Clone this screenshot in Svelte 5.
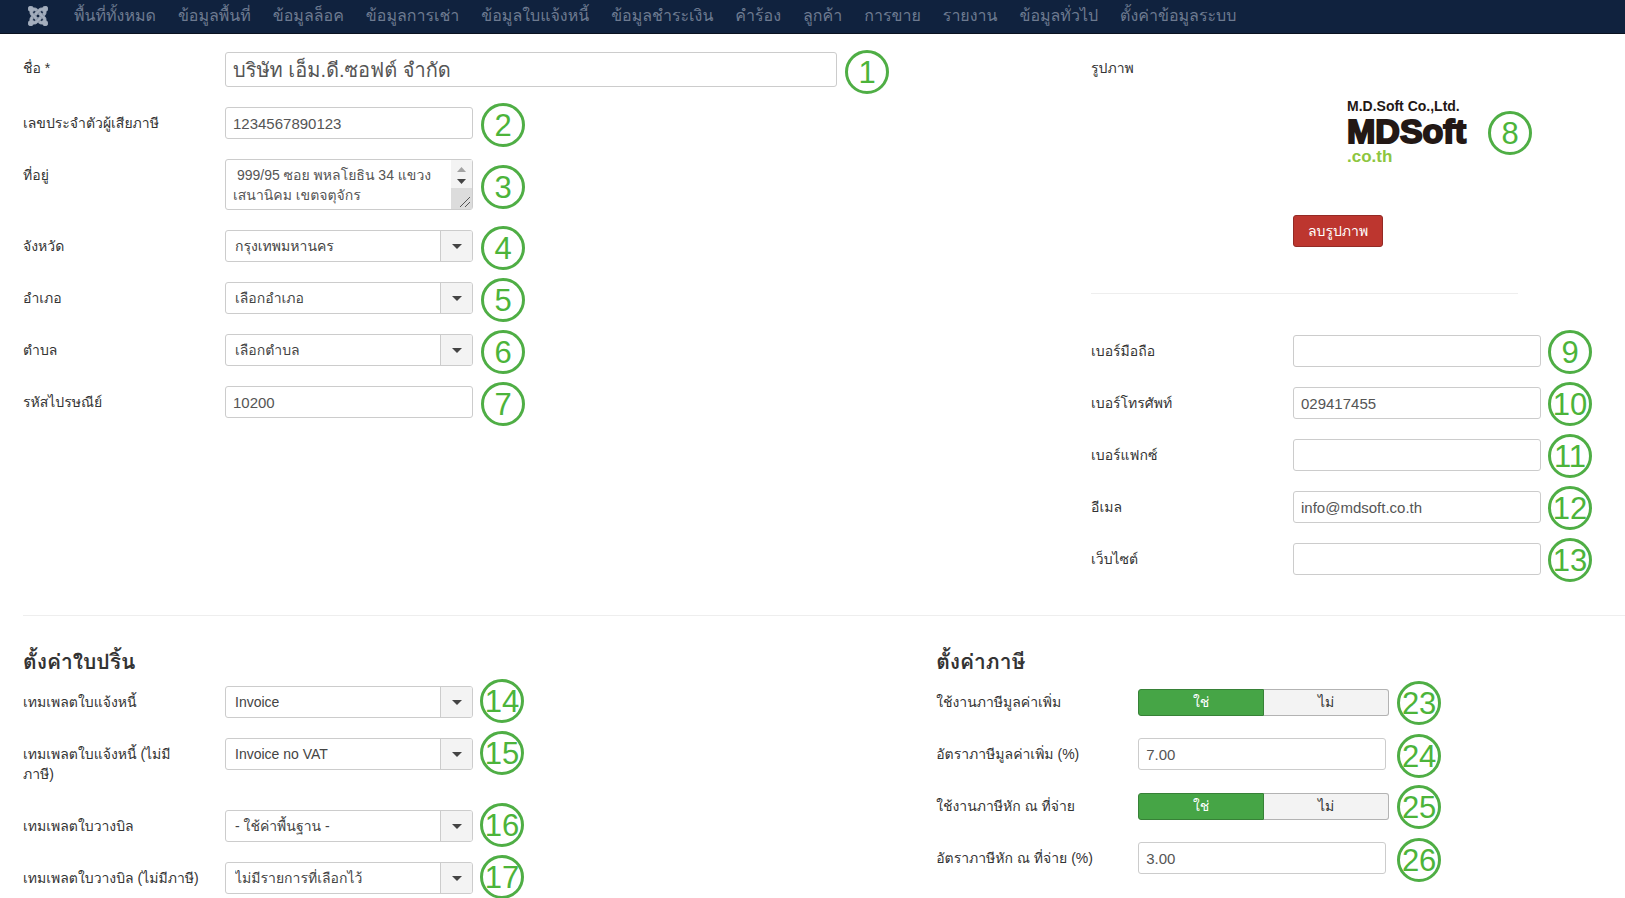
<script>
  const menu = [
    'พื้นที่ทั้งหมด', 'ข้อมูลพื้นที่', 'ข้อมูลล็อค', 'ข้อมูลการเช่า', 'ข้อมูลใบแจ้งหนี้', 'ข้อมูลชำระเงิน',
    'คำร้อง', 'ลูกค้า', 'การขาย', 'รายงาน', 'ข้อมูลทั่วไป', 'ตั้งค่าข้อมูลระบบ'
  ];

  const details = [
    { id: 'name', label: 'ชื่อ *', type: 'text', value: 'บริษัท เอ็ม.ดี.ซอฟต์ จำกัด', big: true, no: 1 },
    { id: 'tax-id', label: 'เลขประจำตัวผู้เสียภาษี', type: 'text', value: '1234567890123', no: 2 },
    { id: 'address', label: 'ที่อยู่', type: 'area', value: ' 999/95 ซอย พหลโยธิน 34 แขวง\nเสนานิคม เขตจตุจักร', no: 3 },
    { id: 'province', label: 'จังหวัด', type: 'select', value: 'กรุงเทพมหานคร', no: 4 },
    { id: 'district', label: 'อำเภอ', type: 'select', value: 'เลือกอำเภอ', no: 5 },
    { id: 'subdistrict', label: 'ตำบล', type: 'select', value: 'เลือกตำบล', no: 6 },
    { id: 'zip', label: 'รหัสไปรษณีย์', type: 'text', value: '10200', no: 7 }
  ];

  const contact = [
    { id: 'mobile', label: 'เบอร์มือถือ', type: 'text', value: '', no: 9 },
    { id: 'phone', label: 'เบอร์โทรศัพท์', type: 'text', value: '029417455', no: 10 },
    { id: 'fax', label: 'เบอร์แฟกซ์', type: 'text', value: '', no: 11 },
    { id: 'email', label: 'อีเมล', type: 'text', value: 'info@mdsoft.co.th', no: 12 },
    { id: 'website', label: 'เว็บไซต์', type: 'text', value: '', no: 13 }
  ];

  const print = [
    { id: 'tpl-invoice', label: 'เทมเพลตใบแจ้งหนี้', type: 'select', value: 'Invoice', no: 14 },
    { id: 'tpl-invoice-novat', label: 'เทมเพลตใบแจ้งหนี้ (ไม่มี\nภาษี)', type: 'select', value: 'Invoice no VAT', no: 15 },
    { id: 'tpl-bill', label: 'เทมเพลตใบวางบิล', type: 'select', value: '- ใช้ค่าพื้นฐาน -', no: 16 },
    { id: 'tpl-bill-novat', label: 'เทมเพลตใบวางบิล (ไม่มีภาษี)', type: 'select', value: 'ไม่มีรายการที่เลือกไว้', no: 17 }
  ];

  const tax = [
    { id: 'vat-on', label: 'ใช้งานภาษีมูลค่าเพิ่ม', type: 'toggle', no: 23 },
    { id: 'vat-rate', label: 'อัตราภาษีมูลค่าเพิ่ม (%)', type: 'text', value: '7.00', no: 24 },
    { id: 'wht-on', label: 'ใช้งานภาษีหัก ณ ที่จ่าย', type: 'toggle', no: 25 },
    { id: 'wht-rate', label: 'อัตราภาษีหัก ณ ที่จ่าย (%)', type: 'text', value: '3.00', no: 26 }
  ];
</script>

{#snippet field(f)}
  <div class="row">
    {#if f.type === 'toggle'}
      <span class="label" id="{f.id}-label">{f.label}</span>
    {:else}
      <label class="label" for={f.id}>{f.label}</label>
    {/if}
    <div class="control" class:wide={f.big}>
      {#if f.type === 'select'}
        <div class="select">
          <select id={f.id}><option>{f.value}</option></select>
          <span class="drop"></span>
        </div>
      {:else if f.type === 'area'}
        <div class="area">
          <textarea id={f.id} rows="2" value={f.value}></textarea>
          <svg class="bar" viewBox="0 0 21 49" aria-hidden="true">
            <rect width="21" height="28" fill="#f3f3f3" />
            <rect y="28" width="21" height="21" fill="#dcdcdc" />
            <path d="M6 12 L10.500 7 L15 12Z" fill="#a3a3a3" />
            <path d="M6 19 L15 19 L10.500 24Z" fill="#444" />
            <path d="M9 47 L19 37 M14 47 L19 42" stroke="#555" fill="none" />
          </svg>
        </div>
      {:else if f.type === 'toggle'}
        <div class="toggle" role="radiogroup" aria-labelledby="{f.id}-label">
          <label class="yes"><input type="radio" name={f.id} checked />ใช่</label>
          <label class="no"><input type="radio" name={f.id} />ไม่</label>
        </div>
      {:else}
        <input class="text" class:big={f.big} id={f.id} type="text" value={f.value} />
      {/if}
      <span class="badge">{f.no}</span>
    </div>
  </div>
{/snippet}

<nav>
  <a class="brand" href="#home" aria-label="Joomla">
    <svg viewBox="0 0 24 24">
      {#each [0, 90, 180, 270] as turn}
        <path
          transform="rotate({turn} 12 12)"
          d="M16.719 14.759L14.22 17.26l-2.37 2.37-.462.466c-1.368 1.365-3.297 1.83-5.047 1.397-.327 1.424-1.604 2.49-3.13 2.49C1.438 23.983 0 22.547 0 20.772c0-1.518 1.055-2.789 2.469-3.123-.446-1.76.016-3.705 1.396-5.08l.179-.18 2.37 2.37-.184.181c-.769.779-.769 2.024 0 2.789.771.78 2.022.78 2.787 0l.465-.465 2.367-2.371 2.502-2.506 2.368 2.372z"
        />
      {/each}
    </svg>
  </a>
  {#each menu as item}
    <a href="#menu">{item}</a>
  {/each}
</nav>

<main>
  <div class="cols top">
    <section class="details">
      {#each details as f}{@render field(f)}{/each}
    </section>
    <section>
      <div class="row photo">
        <span class="label">รูปภาพ</span>
        <div class="media">
          <div class="logo">
            <span class="l1">M.D.Soft Co.,Ltd.</span>
            <span class="l2">MDSoft</span>
            <span class="l3">.co.th</span>
            <span class="badge">8</span>
          </div>
          <button type="button">ลบรูปภาพ</button>
        </div>
      </div>
      <hr class="short" />
      {#each contact as f}{@render field(f)}{/each}
    </section>
  </div>
  <hr />
  <div class="cols bottom">
    <section class="print">
      <h2>ตั้งค่าใบปริ้น</h2>
      {#each print as f}{@render field(f)}{/each}
    </section>
    <section class="tax">
      <h2>ตั้งค่าภาษี</h2>
      {#each tax as f}{@render field(f)}{/each}
    </section>
  </div>
</main>

<style>
  :global(body) {
    background: #fff;
    color: #333;
    font: 14px/20px 'Liberation Sans', Tahoma, Loma, 'Noto Sans Thai', sans-serif;
  }
  nav {
    display: flex;
    align-items: center;
    gap: 22px;
    height: 33px;
    padding-left: 28px;
    background: #10223e;
    border-bottom: 1px solid #0a1220;
    font-size: 16px;
    white-space: nowrap;
  }
  nav a {
    color: #6d7a90;
    text-decoration: none;
    padding-bottom: 2px;
  }
  .brand {
    display: flex;
    margin-right: 4px;
  }
  .brand svg {
    width: 20px;
    height: 20px;
    fill: #a4aebd;
    stroke: #a4aebd;
    stroke-width: 1px;
  }
  main {
    padding: 18px 0 6px 23px;
  }
  .cols {
    display: grid;
  }
  .top {
    grid-template-columns: minmax(0, 2fr) minmax(0, 1fr);
  }
  .bottom {
    grid-template-columns: minmax(0, 57fr) minmax(0, 43fr);
  }
  section {
    display: flex;
    flex-direction: column;
    gap: 20px;
    --drop: 1px;
    --gap: 7px;
  }
  .details {
    --drop: 2px;
    --gap: 8px;
  }
  .print {
    --drop: -1px;
  }
  .tax {
    --drop: 2px;
    --gap: 11px;
  }
  .row {
    display: flex;
    align-items: flex-start;
    gap: 22px;
  }
  .label {
    flex: none;
    width: 180px;
    padding: 6px 0;
    box-sizing: border-box;
    white-space: pre-line;
  }
  .control {
    position: relative;
    width: 248px;
  }
  .wide {
    width: 612px;
  }
  .text,
  select,
  textarea {
    display: block;
    box-sizing: border-box;
    width: 100%;
    height: 32px;
    margin: 0;
    padding: 0 7px;
    border: 1px solid #ccc;
    border-radius: 3px;
    background: #fff;
    color: #555;
    font: inherit;
    font-size: 15px;
    outline: none;
  }
  .big {
    height: 35px;
    font-size: 20px;
  }
  select {
    appearance: none;
    padding: 0 40px 0 9px;
    color: #444;
    font-size: 14px;
  }
  .select,
  .area {
    position: relative;
  }
  .drop {
    position: absolute;
    inset: 1px 1px 1px auto;
    width: 31px;
    border-left: 1px solid #ccc;
    border-radius: 0 2px 2px 0;
    background: #f3f3f3;
    pointer-events: none;
    display: grid;
    place-items: center;
  }
  .drop::after {
    content: '';
    border: 5px solid transparent;
    border-top: 5px solid #444;
    border-bottom: 0;
  }
  textarea {
    height: 51px;
    padding: 5px 24px 5px 7px;
    line-height: 20px;
    overflow: hidden;
    resize: none;
    white-space: pre;
    font-size: 14px;
  }
  .bar {
    position: absolute;
    top: 1px;
    right: 1px;
    width: 21px;
    height: 49px;
  }
  .badge {
    position: absolute;
    left: calc(100% + var(--gap));
    top: calc(50% - 22px + var(--drop));
    box-sizing: border-box;
    width: 44px;
    height: 44px;
    border: 3px solid #4fae45;
    border-radius: 50%;
    color: #4cb43a;
    font-size: 31px;
    line-height: 40px;
    display: flex;
    justify-content: center;
  }
  .toggle {
    display: flex;
    width: 251px;
    height: 27px;
    margin-top: 3px;
  }
  .toggle label {
    flex: 1;
    box-sizing: border-box;
    border: 1px solid #b3b3b3;
    border-radius: 0 3px 3px 0;
    background: #f3f3f3;
    text-align: center;
    line-height: 25px;
  }
  .toggle .yes {
    border-color: #378137;
    border-radius: 3px 0 0 3px;
    background: #46a546;
    color: #fff;
  }
  .toggle .no {
    border-left: 0;
  }
  .toggle input {
    position: absolute;
    opacity: 0;
    margin: 0;
  }
  .media {
    display: flex;
    flex-direction: column;
    align-items: flex-start;
    gap: 50px;
    padding-top: 47px;
  }
  .logo {
    position: relative;
    display: flex;
    flex-direction: column;
    margin-left: 54px;
    width: 134px;
    height: 66px;
    font-weight: bold;
    color: #231815;
    white-space: nowrap;
  }
  .logo .badge {
    font-weight: normal;
  }
  .l1 {
    font-size: 14px;
    line-height: 15px;
  }
  .l2 {
    font-size: 34px;
    line-height: 34px;
    -webkit-text-stroke: 2px #231815;
  }
  .l3 {
    color: #8dc63f;
    font-size: 17px;
    line-height: 18px;
  }
  button {
    height: 32px;
    padding: 0 14px;
    border: 1px solid #942a25;
    border-radius: 3px;
    background: #bd362f;
    color: #fff;
    font: inherit;
  }
  hr {
    width: 100%;
    margin: 40px 0 0;
    border: 0;
    border-top: 1px solid #eee;
    box-sizing: border-box;
  }
  .short {
    width: 80%;
    margin: 26px 0 21px;
  }
  h2 {
    margin: 36px 0 -6px;
    font-size: 21px;
    line-height: 20px;
  }
</style>
